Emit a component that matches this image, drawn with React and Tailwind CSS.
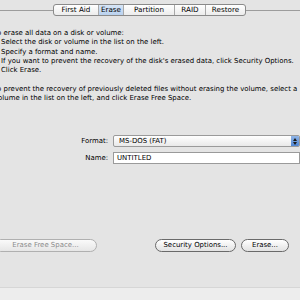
export default function App() {
  const tabs = [
    { label: 'First Aid', w: 'w-[44px]' },
    { label: 'Erase', w: 'w-[25px]' },
    { label: 'Partition', w: 'w-[51px]' },
    { label: 'RAID', w: 'w-[31px]' },
    { label: 'Restore', w: 'w-[40px]' },
  ]
  return (
    <div className="w-[300px] h-[300px] bg-[#e4e4e4] flex flex-col overflow-hidden text-black font-['DejaVu_Sans',sans-serif] text-[6.95px] leading-[9.3px]">
      {/* tab strip */}
      <div className="flex items-center mt-[4px] h-[12px]">
        <div className="w-[53px] h-px bg-[#9c9c9c]" />
        <div className="flex h-[12px] border border-[#8a8a8a] rounded-[3px] overflow-hidden bg-gradient-to-b from-[#ffffff] to-[#ececec]">
          {tabs.map((t, i) => (
            <div
              key={t.label}
              className={
                t.w + ' flex items-center justify-center text-[7.2px] ' +
                (i > 0 ? 'border-l border-[#a8a8a8] ' : '') +
                (t.label === 'Erase' ? 'bg-gradient-to-b from-[#d7e6f7] to-[#b9d1ee]' : '')
              }
            >
              {t.label}
            </div>
          ))}
        </div>
        <div className="flex-1 h-px bg-[#9c9c9c]" />
      </div>

      {/* instructions */}
      <div className="mt-[13px] whitespace-nowrap">
        <p className="-ml-[6px]">To erase all data on a disk or volume:</p>
        <p className="ml-[1px]">Select the disk or volume in the list on the left.</p>
        <p className="ml-[1px]">Specify a format and name.</p>
        <p className="ml-[1px]">If you want to prevent the recovery of the disk's erased data, click Security Options.</p>
        <p className="ml-[1px]">Click Erase.</p>
        <p>&nbsp;</p>
        <p className="-ml-[6px]">To prevent the recovery of previously deleted files without erasing the volume, select a</p>
        <p className="-ml-[6px]">volume in the list on the left, and click Erase Free Space.</p>
      </div>

      {/* format / name */}
      <div className="mt-[32px] grid grid-cols-[108px_1fr] gap-x-[5px] gap-y-[5px] items-center">
        <span className="text-right">Format:</span>
        <div className="flex h-[12px] border border-[#9a9a9a] rounded-[2px] bg-gradient-to-b from-[#ffffff] to-[#e9e9e9] overflow-hidden">
          <span className="flex-1 pl-[5px] leading-[11px]">MS-DOS (FAT)</span>
          <div className="w-[8px] flex flex-col items-center justify-center gap-[1px] bg-gradient-to-b from-[#8fb4e6] to-[#4f86d4]">
            <svg width="4" height="3" viewBox="0 0 4 3"><path d="M0 3 L2 0 L4 3Z" fill="#1a1a1a" /></svg>
            <svg width="4" height="3" viewBox="0 0 4 3"><path d="M0 0 L2 3 L4 0Z" fill="#1a1a1a" /></svg>
          </div>
        </div>
        <span className="text-right">Name:</span>
        <div className="h-[12px] border border-[#9a9a9a] bg-white pl-[3px] leading-[11px]">UNTITLED</div>
      </div>

      {/* buttons */}
      <div className="mt-[75px] flex items-center h-[13px]">
        <div className="-ml-[6px] w-[103px] h-[13px] border border-[#b0b0b0] rounded-full bg-gradient-to-b from-[#fafafa] to-[#e6e6e6] text-[#8c8c8c] flex items-center justify-center">
          Erase Free Space...
        </div>
        <div className="ml-[58px] w-[81px] h-[13px] border border-[#6a6a6a] rounded-full bg-gradient-to-b from-[#ffffff] to-[#e2e2e2] flex items-center justify-center">
          Security Options...
        </div>
        <div className="ml-[5px] w-[48px] h-[13px] border border-[#6a6a6a] rounded-full bg-gradient-to-b from-[#ffffff] to-[#e2e2e2] flex items-center justify-center">
          Erase...
        </div>
      </div>

      <div className="mt-[35px] flex-1 border-t border-[#d6d6d6] bg-[#ededed]" />
    </div>
  )
}
